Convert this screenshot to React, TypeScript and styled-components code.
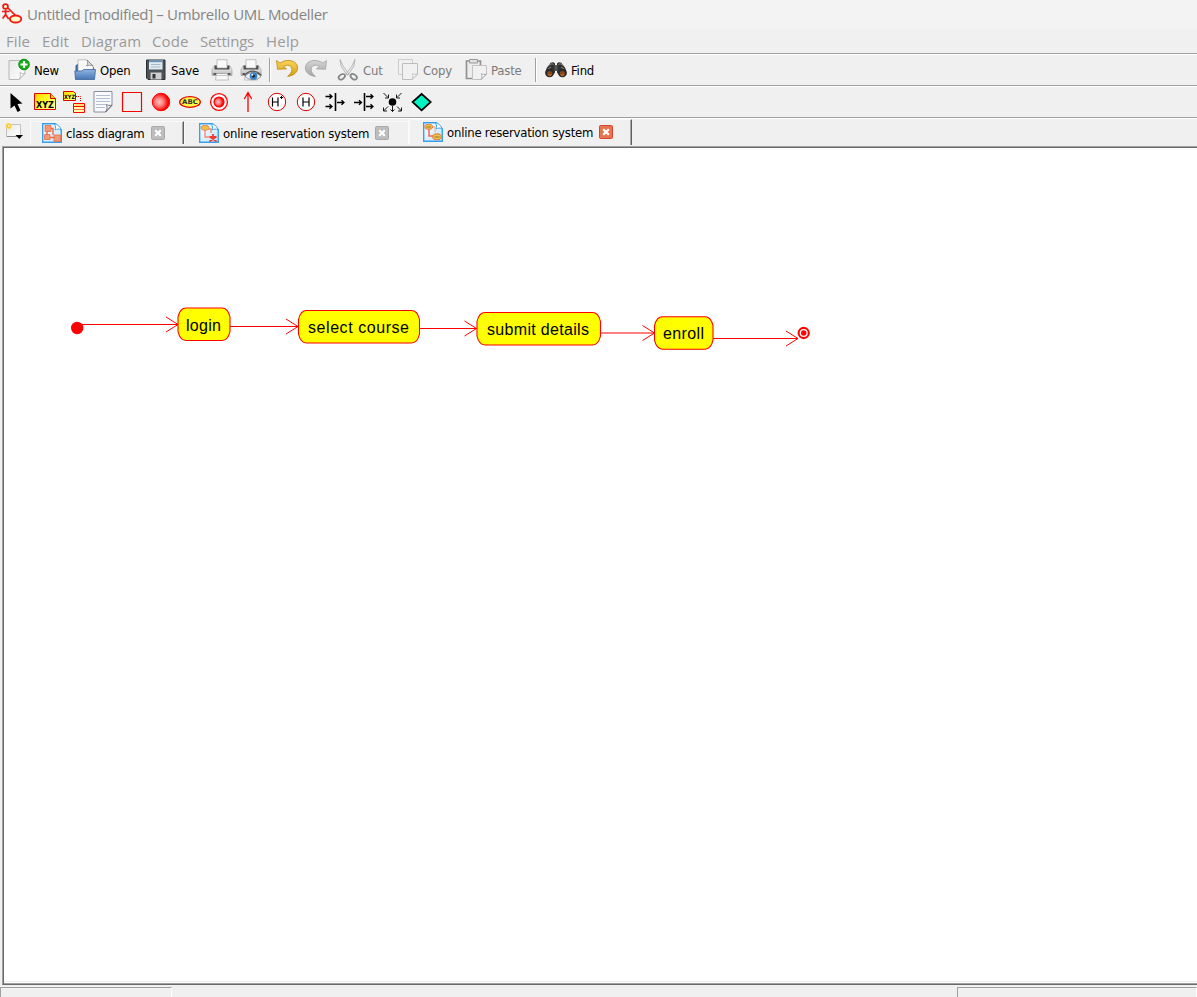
import React from "react";
import styled, { createGlobalStyle } from "styled-components";

const Global = createGlobalStyle`
  *{box-sizing:border-box}
  html,body{margin:0;padding:0;background:#f0f0f0;overflow:hidden}
  svg{display:block;flex:none;overflow:visible}
`;
const Window = styled.div`
  width:1197px;height:997px;display:flex;flex-direction:column;background:#f0f0f0;
  font-family:"DejaVu Sans Condensed","DejaVu Sans",sans-serif;font-size:13px;color:#000;overflow:hidden;
`;
const TitleBar = styled.header`
  height:29px;flex:none;background:#f3f3f3;display:flex;align-items:center;padding:0 0 2px 1px;gap:4px;
  font:15px "Open Sans","Noto Sans",sans-serif;color:#858585;
`;
const Title = styled.span`letter-spacing:-.33px;white-space:nowrap;`;
const MenuBar = styled.nav`
  height:24px;flex:none;display:flex;align-items:center;padding-left:6px;
  font:15px "Open Sans","Noto Sans",sans-serif;color:#9b9b9b;
`;
const MenuItem = styled.span<{ $w: number; $track?: number }>`
  width:${p => p.$w}px;flex:none;white-space:nowrap;letter-spacing:${p => p.$track ?? 0.1}px;
`;
const Toolbar = styled.div<{ $pad: number }>`
  height:32px;flex:none;display:flex;align-items:center;padding-left:${p => p.$pad}px;
  border-top:1px solid #a0a0a0;box-shadow:inset 0 1px #fff;
`;
const ToolButton = styled.div<{ $w: number; $off?: boolean }>`
  width:${p => p.$w}px;flex:none;display:flex;align-items:center;gap:4px;color:${p => (p.$off ? "#7b7b7b" : "#000")};
  letter-spacing:-.2px;white-space:nowrap;
`;
const Caption = styled.span`padding-top:1px;`;
const Separator = styled.div<{ $w: number; $x: number }>`
  width:${p => p.$w}px;flex:none;height:24px;padding-left:${p => p.$x}px;
  &::before{content:"";display:block;width:1px;height:24px;background:#a0a0a0;border-right:1px solid #fff;}
`;
const ShapeButton = styled.div`width:29px;flex:none;display:flex;justify-content:center;`;
const TabStrip = styled.div`
  height:29px;flex:none;display:flex;border-top:1px solid #a0a0a0;box-shadow:inset 0 1px #fff;padding-left:4px;
`;
const NewTab = styled.div`width:26px;flex:none;padding-top:4px;`;
const Tab = styled.div<{ $w: number; $pad: number; $active?: boolean; $end?: boolean }>`
  width:${p => p.$w}px;flex:none;display:flex;align-items:center;
  margin-top:${p => (p.$active ? 1 : 3)}px;height:${p => (p.$active ? 26 : 23)}px;
  padding:0 0 ${p => (p.$active ? 2 : 1)}px ${p => p.$pad}px;gap:4px;
  border-left:1px solid #fafafa;border-top:1px solid #fafafa;border-radius:2px 0 0 0;
  border-right:1px solid ${p => (p.$end ? "#606060" : "#fafafa")};
  box-shadow:${p => (p.$end ? "inset -1px 0 #a8a8a8" : "none")};
`;
const TabLabel = styled.span<{ $w: number }>`width:${p => p.$w}px;padding-top:2px;letter-spacing:-.22px;white-space:nowrap;`;
const Canvas = styled.main`
  flex:1;margin-left:2px;background:#fff;border-left:1px solid #a0a0a0;border-top:1px solid #a0a0a0;
  border-bottom:1px solid #696969;box-shadow:inset 1px 1px #696969,inset 0 -1px #a0a0a0,inset 0 -2px #fff,inset 0 -3px #eee;
  overflow:hidden;
`;
const StatusBar = styled.footer`height:12px;flex:none;display:flex;justify-content:space-between;padding-top:2px;`;
const StatusCell = styled.div<{ $w: number }>`
  width:${p => p.$w}px;border-top:1px solid #a0a0a0;border-left:1px solid #a0a0a0;border-right:1px solid #fff;
`;

type IconProps = { children: React.ReactNode; size?: number };
const Icon = ({ children, size = 22 }: IconProps) => (
  <svg width={size} height={size} viewBox={`0 0 ${size} ${size}`} fill="none">{children}</svg>
);

const Defs = styled.svg`position:absolute;`;
const Gradients = () => (
  <Defs width="0" height="0">
    <defs>
      <linearGradient id="paper" x1="0" y1="0" x2="1" y2="1"><stop stopColor="#e8e8e8" /><stop offset="1" stopColor="#fff" /></linearGradient>
      <linearGradient id="blue" x1="0" y1="0" x2="0" y2="1"><stop stopColor="#8fb4e2" /><stop offset="1" stopColor="#4877b4" /></linearGradient>
      <linearGradient id="gold" x1="0" y1="0" x2="0" y2="1"><stop stopColor="#fbd65a" /><stop offset="1" stopColor="#d49a10" /></linearGradient>
      <linearGradient id="silver" x1="0" y1="0" x2="0" y2="1"><stop stopColor="#d4d4d4" /><stop offset="1" stopColor="#a4a4a4" /></linearGradient>
      <linearGradient id="printer" x1="0" y1="0" x2="0" y2="1"><stop stopColor="#f6f6f6" /><stop offset="1" stopColor="#b5b5b5" /></linearGradient>
      <linearGradient id="yellow" x1="0" y1="0" x2="1" y2="1"><stop stopColor="#ffc800" /><stop offset=".45" stopColor="#ffff20" /><stop offset="1" stopColor="#ffffb0" /></linearGradient>
      <radialGradient id="ball" cx=".4" cy=".5" r=".6"><stop stopColor="#ffc4c4" /><stop offset=".35" stopColor="#ff8a8a" /><stop offset=".85" stopColor="#f00" /></radialGradient>
      <linearGradient id="tabblue" x1="0" y1="0" x2="1" y2="1"><stop stopColor="#fff" /><stop offset="1" stopColor="#bfe3fd" /></linearGradient>
    </defs>
  </Defs>
);

const AppIcon = () => (
  <Icon size={22}>
    <circle cx="4.500" cy="3.500" r="2.400" stroke="#f01c14" strokeWidth="1.800" fill="#ffd" />
    <path d="M1 8.500h7.500M4.600 6.500v6M4.600 11.500 1.600 15.500M4.600 11.500 7.700 16M7 5l7.500 7.500" stroke="#f01c14" strokeWidth="1.700" />
    <ellipse cx="14.600" cy="16" rx="5.700" ry="3.500" stroke="#f01c14" strokeWidth="1.900" fill="#ffffc4" />
  </Icon>
);
const NewIcon = () => (
  <Icon>
    <path d="M1 1.500h16v13l-6 6H1z" fill="url(#paper)" stroke="#b8b8b8" />
    <path d="M17 14c-2 1-4 .5-5-.5 1 3 0 5-1 7z" fill="#fff" stroke="#b0b0b0" strokeWidth=".8" />
    <circle cx="16" cy="5.500" r="5.300" fill="#15ad15" stroke="#08940a" />
    <path d="M16 2v7M12.500 5.500h7" stroke="#fff" strokeWidth="2.200" />
  </Icon>
);
const OpenIcon = () => (
  <Icon>
    <path d="M1.500 20V6.500l2-1.500h4L9 8h11v12z" fill="#3a659f" />
    <path d="M4 14V.8h9l6 6V14z" fill="#f8f8f8" stroke="#aaa" strokeWidth=".7" />
    <path d="M13 1c1 2 1 4-.5 6 2-1 4.500-1 6.500 0z" fill="#ddd" stroke="#777" strokeWidth=".7" />
    <path d="M.8 12h7l2-1.500h11.700L20.500 20.500H1.500z" fill="url(#blue)" stroke="#3a659f" strokeWidth=".8" />
  </Icon>
);
const SaveIcon = () => (
  <Icon>
    <path d="M1.500 1h18.500v19.500H3l-1.500-1.500z" fill="#4c5156" stroke="#2c2f32" />
    <path d="M4 1h13.500v9.500H4z" fill="#dfeaf2" /><path d="M4 1h13.500v2.200H4z" fill="#6c92b6" />
    <path d="M6 5.500h9.500M6 8h9.500" stroke="#a9b7c2" />
    <path d="M5.500 13.500h11v7h-11z" fill="#cfcfcf" /><path d="M7.500 15h3v4.500h-3z" fill="#333" />
  </Icon>
);
const printerBody = (
  <>
    <path d="M3 7h16l2 3.500v6H1v-6z" fill="url(#printer)" stroke="#999" strokeWidth=".6" />
    <path d="M3.500 6.500h15v4h-15z" fill="#4a4a4a" />
    <path d="M6 9V.7h10V9z" fill="#fafafa" stroke="#aaa" strokeWidth=".7" />
    <path d="M2.500 15h17" stroke="#4d4d4d" strokeWidth="1.800" />
    <path d="M5.500 14.500h11l1 6.500h-13z" fill="#f7f7f7" stroke="#aaa" strokeWidth=".7" />
    <path d="M5.500 16.500h11" stroke="#c9c9c9" />
  </>
);
const PrintIcon = () => <Icon>{printerBody}</Icon>;
const PreviewIcon = () => (
  <Icon>
    {printerBody}
    <path d="M5 17.500c3.500-5 11-5.500 16 0-4 4-11 4.500-16 0z" fill="#eee" stroke="#777" strokeWidth=".7" />
    <path d="M5 16.500c3.500-5.500 11.500-6 16.500 0" stroke="#555" strokeWidth="1.200" />
    <circle cx="13.500" cy="17" r="3.800" fill="#3a80c4" /><circle cx="13.500" cy="17" r="1.600" fill="#102840" /><circle cx="12.300" cy="15.700" r="1" fill="#fff" />
  </Icon>
);
const arc = "M1.500.8 2.500 9.500l9-.3-3-2.400c4-2.500 8.300-1.200 8.300 3 0 3-1.800 4.700-4.200 7 6-.8 10.300-4 10-9.300C22.200 1.300 13-1.800 5 3.300z";
const UndoIcon = () => <Icon><path d={arc} transform="translate(0 .7)" fill="url(#gold)" stroke="#bd8a14" strokeWidth=".8" /></Icon>;
const RedoIcon = () => <Icon><path d={arc} transform="matrix(-1 0 0 1 24 .7)" fill="url(#silver)" stroke="#a2a2a2" strokeWidth=".8" /></Icon>;
const CutIcon = () => (
  <Icon>
    <path d="M3 .5 6 7l6 8-2 1-6-9zM18 .5 15 7l-6 8 2 1 6-9z" fill="#eee" stroke="#aaa" strokeWidth=".8" />
    <ellipse cx="4.800" cy="17.800" rx="3.500" ry="2.300" transform="rotate(-35 4.800 17.800)" stroke="#858585" strokeWidth="1.700" />
    <ellipse cx="16.700" cy="17.800" rx="3.500" ry="2.300" transform="rotate(35 16.700 17.800)" stroke="#858585" strokeWidth="1.700" />
  </Icon>
);
const CopyIcon = () => (
  <Icon>
    <path d="M1.500.5h14v15h-14z" fill="#f1f1f1" stroke="#ccc" />
    <path d="M5.500 4.500h15v11L15 20.500H5.500z" fill="#f1f1f1" stroke="#bdbdbd" /><path d="M20.500 15c-2 .8-4 .5-5-.3.800 2.500.5 4-.5 5.800z" fill="#fff" stroke="#c4c4c4" />
  </Icon>
);
const PasteIcon = () => (
  <Icon>
    <path d="M1.500 2h14v17.500h-14z" fill="#ededed" stroke="#929292" strokeWidth="1.700" />
    <path d="M4.500.5h8v3.500h-8z" fill="#e1e1e1" stroke="#999" />
    <path d="M7.500 6.500h14v9L16.500 20.500h-9z" fill="#f1f1f1" stroke="#c2c2c2" /><path d="M21.500 15c-2 .8-4 .5-5-.3.800 2.500.5 4-.5 5.800z" fill="#fff" stroke="#aaa" />
  </Icon>
);
const FindIcon = () => (
  <Icon>
    <path d="M4.500 5.500c1-2.500 4-3 5.500-1v9l-3 4-6-2C-.5 12 2 8 4.500 5.500zM17.500 5.500c-1-2.500-4-3-5.500-1v9l3 4 6-2c1.500-3.500-1-7.500-3.500-10z" fill="#303030" />
    <path d="M9.500 6h3v6h-3z" fill="#555" /><path d="M4.500 6.500c1-2 3-2 4-1M13.500 5.500c1-1 3-1 4 1M3 10l3-2M19 10l-3-2" stroke="#929292" />
    <circle cx="4.500" cy="14" r="4.300" fill="#292929" /><circle cx="17.500" cy="14" r="4.300" fill="#292929" />
    <circle cx="4.700" cy="14.500" r="2.500" fill="#8c4613" /><circle cx="17.300" cy="14.500" r="2.500" fill="#8c4613" />
    <path d="M3.300 15.500c1 1 2 1 3 0M15.800 15.500c1 1 2 1 3 0" stroke="#e48832" />
  </Icon>
);

const glyph = { fontFamily: '"DejaVu Sans",sans-serif', fontWeight: 700 };
const shapes: React.ReactNode[] = [
  <path d="M5.500 2v15.500l4-3 3 6.500 3-1.500-3-6.500 5-.5z" fill="#000" />,
  <><path d="M.5 2.500h16l5 5v11H.5z" fill="url(#yellow)" stroke="#e00000" /><path d="M16.500 2.500v5h5" fill="#ffe000" stroke="#e00000" /><text x="11" y="17.300" fontSize="9" textAnchor="middle" textLength="18" lengthAdjust="spacingAndGlyphs" fill="#000" {...glyph}>XYZ</text></>,
  <><path d="M.5.500h10l2 2v7H.5z" fill="url(#yellow)" stroke="#e00000" /><text x="6.500" y="8" fontSize="6" textAnchor="middle" textLength="11" lengthAdjust="spacingAndGlyphs" fill="#000" {...glyph}>XYZ</text><path d="M13 5.500h4.500v5" stroke="#e00000" strokeDasharray="1 1" /><path d="M10.500 12.500h11v9h-11z" fill="#ffffa0" stroke="#f00" /><path d="M10.500 15.500h11" stroke="#f00" /><path d="M10.500 18.500h11" stroke="#f66" /><path d="M12 14h8" stroke="#fb4" /></>,
  <><path d="M2 .5h18v14l-6 6.500H2z" fill="#f8faff" stroke="#858e9e" /><path d="M4 4.500h14M4 7.500h14M4 10.500h14M4 13.500h10M4 16.500h9" stroke="#b3bed2" /><path d="M20 14c-2 1-5 0-5.500-.5 1 3 .5 5-1 7.500z" fill="#eee" stroke="#777" /></>,
  <path d="M1.500 1.500h19v19h-19z" stroke="#f00" strokeWidth="1.200" />,
  <circle cx="11" cy="11" r="8.700" fill="url(#ball)" stroke="#f00" />,
  <><ellipse cx="11" cy="11" rx="10.300" ry="5.300" fill="#ff4" stroke="#e80000" strokeWidth="1.300" /><text x="11" y="13.300" fontSize="6.500" textAnchor="middle" textLength="16" lengthAdjust="spacingAndGlyphs" fill="#333" {...glyph}>ABC</text></>,
  <><circle cx="11" cy="11" r="8.400" fill="#fff" stroke="#f00" strokeWidth="1.300" /><circle cx="11" cy="11" r="5" fill="url(#ball)" stroke="#f00" strokeWidth="1.200" /></>,
  <path d="M11 21V2M7.300 8 11 1.500l3.700 6.500" stroke="#f00" strokeWidth="1.300" />,
  <><circle cx="11" cy="11" r="8.700" fill="#fff" stroke="#e00000" /><path d="M6.500 6.500v9M12 6.500v9M6.500 11H12" stroke="#000" strokeWidth="1.200" /><path d="M15.500 5v3M14 6.500h3" stroke="#000" /></>,
  <><circle cx="11" cy="11" r="8.700" fill="#fff" stroke="#e00000" /><path d="M8 6.500v9M14 6.500v9M8 11h6" stroke="#000" strokeWidth="1.200" /></>,
  <><path d="M11.500 2v18" stroke="#000" strokeWidth="1.600" /><path d="M1.500 5.500h6M5.500 3.200l2.500 2.300-2.500 2.300M1.500 15.500h6M5.500 13.200l2.500 2.300-2.500 2.300M13 11.500h7M17.500 9.200l2.500 2.300-2.500 2.300" stroke="#000" strokeWidth="1.300" /></>,
  <><path d="M11.500 2v18" stroke="#000" strokeWidth="1.600" /><path d="M1 11.500h7M6 9.200l2.500 2.300L6 13.800M13 5.500h7M17.500 3.200l2.500 2.300-2.500 2.300M13 15.500h7M17.500 13.200l2.500 2.300-2.500 2.300" stroke="#000" strokeWidth="1.300" /></>,
  <><circle cx="10.500" cy="11" r="3.800" fill="#000" /><path d="m1.500 2 4.500 4.500M6.500 3.500V7H3M19.500 2 15 6.500M14.500 3.500V7H18M6 15.500 1.500 20M1.500 16.500V20H5M15 15.500 19.500 20M19.500 16.500V20H16M10.500 15v5.500M8.500 18.500l2 2 2-2" stroke="#000" strokeWidth=".9" /></>,
  <path d="M10.600 3 19.700 11 10.600 19.300 1.500 11z" fill="#00f5c4" stroke="#000" strokeWidth="1.700" />,
];

const NewTabIcon = () => (
  <Icon size={22}>
    <path d="M2.500 2.500h14v11l-1 1h-13z" fill="url(#paper)" stroke="#c0c0c0" />
    <path d="M3 14.500h13" stroke="#8f8f8f" />
    <circle cx="4.700" cy="4" r="3.200" fill="#ffd96b" opacity=".85" /><circle cx="4.700" cy="4" r="2.200" fill="#f7c72c" /><circle cx="4.700" cy="4" r="1" fill="#fff4b8" />
    <path d="M11.500 13h7.500l-3.700 4z" fill="#000" />
  </Icon>
);
const TabIcon = ({ kind }: { kind: "class" | "usecase" | "state" }) => (
  <Icon size={20}>
    <path d="M.7.700h12.600l6 6v12.600H.7z" fill="url(#tabblue)" stroke="#36a0ee" strokeWidth="1.400" />
    <path d="M12.500 1c3 0 6 3 6.500 6-2-1.500-4-1-6 0 1-2 .5-4-.5-6z" fill="#fff" stroke="#42a6ef" />
    {kind === "class" && <><path d="M5 8v4m3-6.500h3V12M8 14.500h5" stroke="#e76a42" strokeWidth="1.400" /><path d="M3 2.500h6v6H3zM12 12h6.500v6.500H12zM2.500 11.500H8v5H2.500z" fill="#f29a78" stroke="#e56d49" strokeWidth=".8" /></>}
    {kind === "usecase" && <><path d="M9 6h3v4M6 7v7h4" stroke="#f28b79" strokeWidth="1.400" /><ellipse cx="6" cy="4.800" rx="4" ry="2.500" fill="#e9c24a" stroke="#ef8b52" /><path d="m10.500 13.500 7 5m0-5-7 5M14 11v4M10.500 14h7" stroke="#ef3c33" strokeWidth="1.800" /></>}
    {kind === "state" && <><path d="M6 7v7h4" stroke="#f26958" strokeWidth="1.500" /><path d="M9 5h3v5" stroke="#f5a294" /><ellipse cx="5.700" cy="4.800" rx="4" ry="2.600" fill="#e9c24a" stroke="#ef7d46" /><ellipse cx="14" cy="14.800" rx="4.300" ry="3" fill="#e9c24a" stroke="#ef6d3d" /><path d="M3.500 5h4.500M11.500 15h5" stroke="#9c7c25" /></>}
  </Icon>
);
const CloseIcon = ({ active }: { active?: boolean }) => (
  <Icon size={14}>
    <rect x=".5" y=".5" width="13" height="13" rx="1" fill={active ? "#e5754f" : "#bdbdbd"} stroke={active ? "#d6452c" : "#a8a8a8"} />
    <path d="m4.200 4.200 5.600 5.600m0-5.600-5.600 5.600" stroke="#fff" strokeWidth="2.200" />
  </Icon>
);

const states = [
  { x: 178, y: 308, w: 52, tx: 186, tw: 35, label: "login" },
  { x: 298.500, y: 310.500, w: 121, tx: 308, tw: 101, label: "select course" },
  { x: 477, y: 312.500, w: 123.500, tx: 487, tw: 102, label: "submit details" },
  { x: 654.500, y: 316.700, w: 58.500, tx: 663, tw: 41, label: "enroll" },
];
const arrows = [[82, 178, 324.500], [230, 298, 326.500], [420, 476.500, 328.500], [601, 654.500, 333], [713, 798, 338.500]];

const Diagram = () => (
  <svg width="1193" height="830" viewBox="3 147 1193 830">
    {arrows.map(([a, b, y]) => <path key={a} d={`M${a} ${y}H${b}M${b - 12} ${y - 7.500}L${b} ${y}L${b - 12} ${y + 7.500}`} stroke="#f00" fill="none" />)}
    {states.map(s => (
      <g key={s.label}>
        <path
          d={`M${s.x + 8} ${s.y}h${s.w - 16}q6 0 8 9v14.500q-2 9-8 9h${16 - s.w}q-6 0-8-9v-14.500q2-9 8-9z`}
          fill="#ff0" stroke="#f00" strokeWidth="1.100"
        />
        <text x={s.tx} y={s.y + 22.500} fontSize="16" textLength={s.tw} fontFamily='"Liberation Sans",Arial,sans-serif'>{s.label}</text>
      </g>
    ))}
    <circle cx="77.200" cy="328" r="6.200" fill="#f00" />
    <circle cx="803.700" cy="333" r="5.100" fill="#fff" stroke="#f00" strokeWidth="2.100" /><circle cx="803.700" cy="333" r="2.700" fill="#f00" />
  </svg>
);

export default function App() {
  return (
    <Window>
      <Global /><Gradients />
      <TitleBar><AppIcon /><Title>Untitled [modified] – Umbrello UML Modeller</Title></TitleBar>
      <MenuBar>
        <MenuItem $w={36}>File</MenuItem><MenuItem $w={39}>Edit</MenuItem><MenuItem $w={71}>Diagram</MenuItem>
        <MenuItem $w={48}>Code</MenuItem><MenuItem $w={66} $track={-0.2}>Settings</MenuItem><MenuItem $w={50} $track={0.2}>Help</MenuItem>
      </MenuBar>
      <Toolbar $pad={8}>
        <ToolButton $w={66}><NewIcon /><Caption>New</Caption></ToolButton>
        <ToolButton $w={71}><OpenIcon /><Caption>Open</Caption></ToolButton>
        <ToolButton $w={66}><SaveIcon /><Caption>Save</Caption></ToolButton>
        <ToolButton $w={29}><PrintIcon /></ToolButton>
        <ToolButton $w={26}><PreviewIcon /></ToolButton>
        <Separator $w={9} $x={3} />
        <ToolButton $w={29}><UndoIcon /></ToolButton>
        <ToolButton $w={33}><RedoIcon /></ToolButton>
        <ToolButton $w={60} $off><CutIcon /><Caption>Cut</Caption></ToolButton>
        <ToolButton $w={68} $off><CopyIcon /><Caption>Copy</Caption></ToolButton>
        <ToolButton $w={68} $off><PasteIcon /><Caption>Paste</Caption></ToolButton>
        <Separator $w={12} $x={2} />
        <ToolButton $w={60}><FindIcon /><Caption>Find</Caption></ToolButton>
      </Toolbar>
      <Toolbar $pad={1}>
        {shapes.map((s, i) => <ShapeButton key={i}><Icon>{s}</Icon></ShapeButton>)}
      </Toolbar>
      <TabStrip>
        <NewTab><NewTabIcon /></NewTab>
        <Tab $w={154} $pad={11} $end><TabIcon kind="class" /><TabLabel $w={81}>class diagram</TabLabel><CloseIcon /></Tab>
        <Tab $w={225} $pad={14}><TabIcon kind="usecase" /><TabLabel $w={148}>online reservation system</TabLabel><CloseIcon /></Tab>
        <Tab $w={223} $pad={13} $active $end><TabIcon kind="state" /><TabLabel $w={148}>online reservation system</TabLabel><CloseIcon active /></Tab>
      </TabStrip>
      <Canvas><Diagram /></Canvas>
      <StatusBar><StatusCell $w={172} /><StatusCell $w={240} /></StatusBar>
    </Window>
  );
}
